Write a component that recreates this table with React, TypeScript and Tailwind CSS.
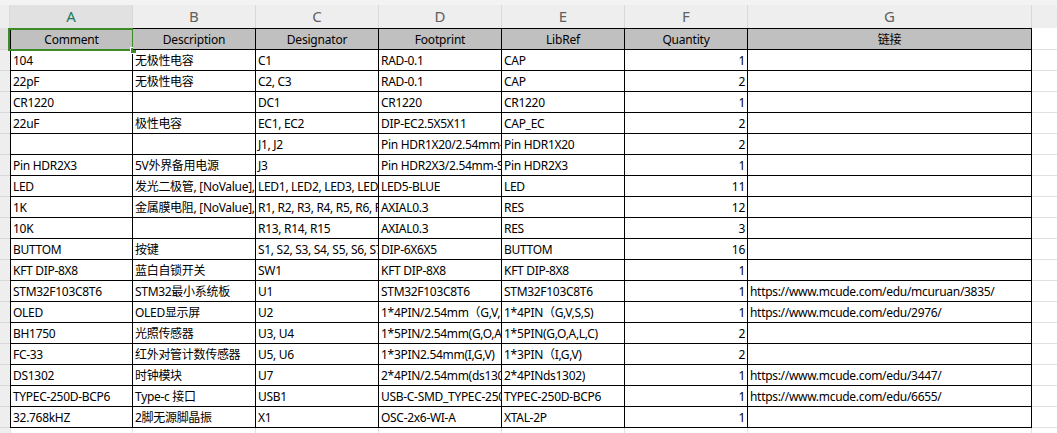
const cols = ["A", "B", "C", "D", "E", "F", "G"];
const widths = ["w-[123px]", "w-[123px]", "w-[123px]", "w-[123px]", "w-[123px]", "w-[123px]", "w-[284px]"];
const heads = ["Comment", "Description", "Designator", "Footprint", "LibRef", "Quantity", "链接"];

const rows: string[][] = [
  ["104", "无极性电容", "C1", "RAD-0.1", "CAP", "1", ""],
  ["22pF", "无极性电容", "C2, C3", "RAD-0.1", "CAP", "2", ""],
  ["CR1220", "", "DC1", "CR1220", "CR1220", "1", ""],
  ["22uF", "极性电容", "EC1, EC2", "DIP-EC2.5X5X11", "CAP_EC", "2", ""],
  ["", "", "J1, J2", "Pin HDR1X20/2.54mm-Straight", "Pin HDR1X20", "2", ""],
  ["Pin HDR2X3", "5V外界备用电源", "J3", "Pin HDR2X3/2.54mm-Straight", "Pin HDR2X3", "1", ""],
  ["LED", "发光二极管, [NoValue], [NoValue]", "LED1, LED2, LED3, LED4, LED5", "LED5-BLUE", "LED", "11", ""],
  ["1K", "金属膜电阻, [NoValue], [NoValue]", "R1, R2, R3, R4, R5, R6, R7, R8", "AXIAL0.3", "RES", "12", ""],
  ["10K", "", "R13, R14, R15", "AXIAL0.3", "RES", "3", ""],
  ["BUTTOM", "按键", "S1, S2, S3, S4, S5, S6, S7, S8", "DIP-6X6X5", "BUTTOM", "16", ""],
  ["KFT DIP-8X8", "蓝白自锁开关", "SW1", "KFT DIP-8X8", "KFT DIP-8X8", "1", ""],
  ["STM32F103C8T6", "STM32最小系统板", "U1", "STM32F103C8T6", "STM32F103C8T6", "1", "https://www.mcude.com/edu/mcuruan/3835/"],
  ["OLED", "OLED显示屏", "U2", "1*4PIN/2.54mm（G,V,S,S)", "1*4PIN（G,V,S,S)", "1", "https://www.mcude.com/edu/2976/"],
  ["BH1750", "光照传感器", "U3, U4", "1*5PIN/2.54mm(G,O,A,L,C)", "1*5PIN(G,O,A,L,C)", "2", ""],
  ["FC-33", "红外对管计数传感器", "U5, U6", "1*3PIN2.54mm(I,G,V)", "1*3PIN（I,G,V)", "2", ""],
  ["DS1302", "时钟模块", "U7", "2*4PIN/2.54mm(ds1302)", "2*4PINds1302)", "1", "https://www.mcude.com/edu/3447/"],
  ["TYPEC-250D-BCP6", "Type-c 接口", "USB1", "USB-C-SMD_TYPEC-250D-BCP6", "TYPEC-250D-BCP6", "1", "https://www.mcude.com/edu/6655/"],
  ["32.768kHZ", "2脚无源脚晶振", "X1", "OSC-2x6-WI-A", "XTAL-2P", "1", ""],
];

const font = { fontFamily: '"Noto Sans", "Noto Sans CJK SC", sans-serif' };

export default function App() {
  return (
    <div className="w-[1057px] h-[433px] overflow-hidden bg-white text-[12px] text-black" style={font}>
      {/* top strip */}
      <div className="h-[5px] bg-[#f3f3f3]" />

      {/* column letters */}
      <div className="flex h-[23px] bg-[#eeeeee]">
        <div className="w-[10px] shrink-0 border-r border-[#d9d9d9]" />
        {cols.map((c, i) => (
          <div
            key={c}
            className={`${widths[i]} shrink-0 flex items-center justify-center border-r border-[#d9d9d9] text-[15px] ${
              i === 0 ? "bg-[#e1e1e1] text-[#217a5c]" : "text-[#5f5f5f]"
            }`}
          >
            {c}
          </div>
        ))}
        <div className="flex-1" />
      </div>

      {/* header row */}
      <div className="flex h-[22px]">
        <div className="w-[10px] shrink-0 bg-[#e1e1e1] border-b border-[#d4d4d4]" />
        {heads.map((h, i) => (
          <div
            key={h}
            className={`${widths[i]} shrink-0 relative flex items-center justify-center pt-px tracking-[-0.2px] bg-[#c0c0c0] border-t border-b border-r border-black ${
              i === 0 ? "border-l" : ""
            }`}
          >
            {h}
            {i === 0 && (
              <>
                <div className="absolute left-[-3px] top-[-1px] right-[-2px] bottom-[-2px] border-2 border-[#3d8b26]" />
                <div className="absolute right-[-4px] bottom-[-4px] w-[5px] h-[5px] bg-[#3d8b26] outline outline-1 outline-white" />
              </>
            )}
          </div>
        ))}
        <div className="flex-1 border-b border-[#e1e1e1]" />
      </div>

      {/* data rows */}
      {rows.map((r, ri) => (
        <div key={ri} className="flex h-[21px]">
          <div className="w-[10px] shrink-0 bg-[#eeeeee] border-b border-[#d9d9d9]" />
          {r.map((v, i) => (
            <div
              key={i}
              className={`${widths[i]} shrink-0 flex items-center pt-px tracking-[-0.3px] border-b border-r border-black overflow-hidden whitespace-nowrap ${
                i === 0 ? "border-l" : ""
              } ${i === 5 ? "justify-end pr-[2px]" : "pl-[2px]"}`}
            >
              {v}
            </div>
          ))}
          <div className="flex-1 border-b border-[#e1e1e1]" />
        </div>
      ))}

      {/* empty area below */}
      <div className="flex h-[10px]">
        <div className="w-[10px] shrink-0 bg-[#eeeeee]" />
        {widths.map((w, i) => (
          <div key={i} className={`${w} shrink-0 border-r border-[#e1e1e1] ${i === 0 ? "border-l" : ""}`} />
        ))}
      </div>
    </div>
  );
}
